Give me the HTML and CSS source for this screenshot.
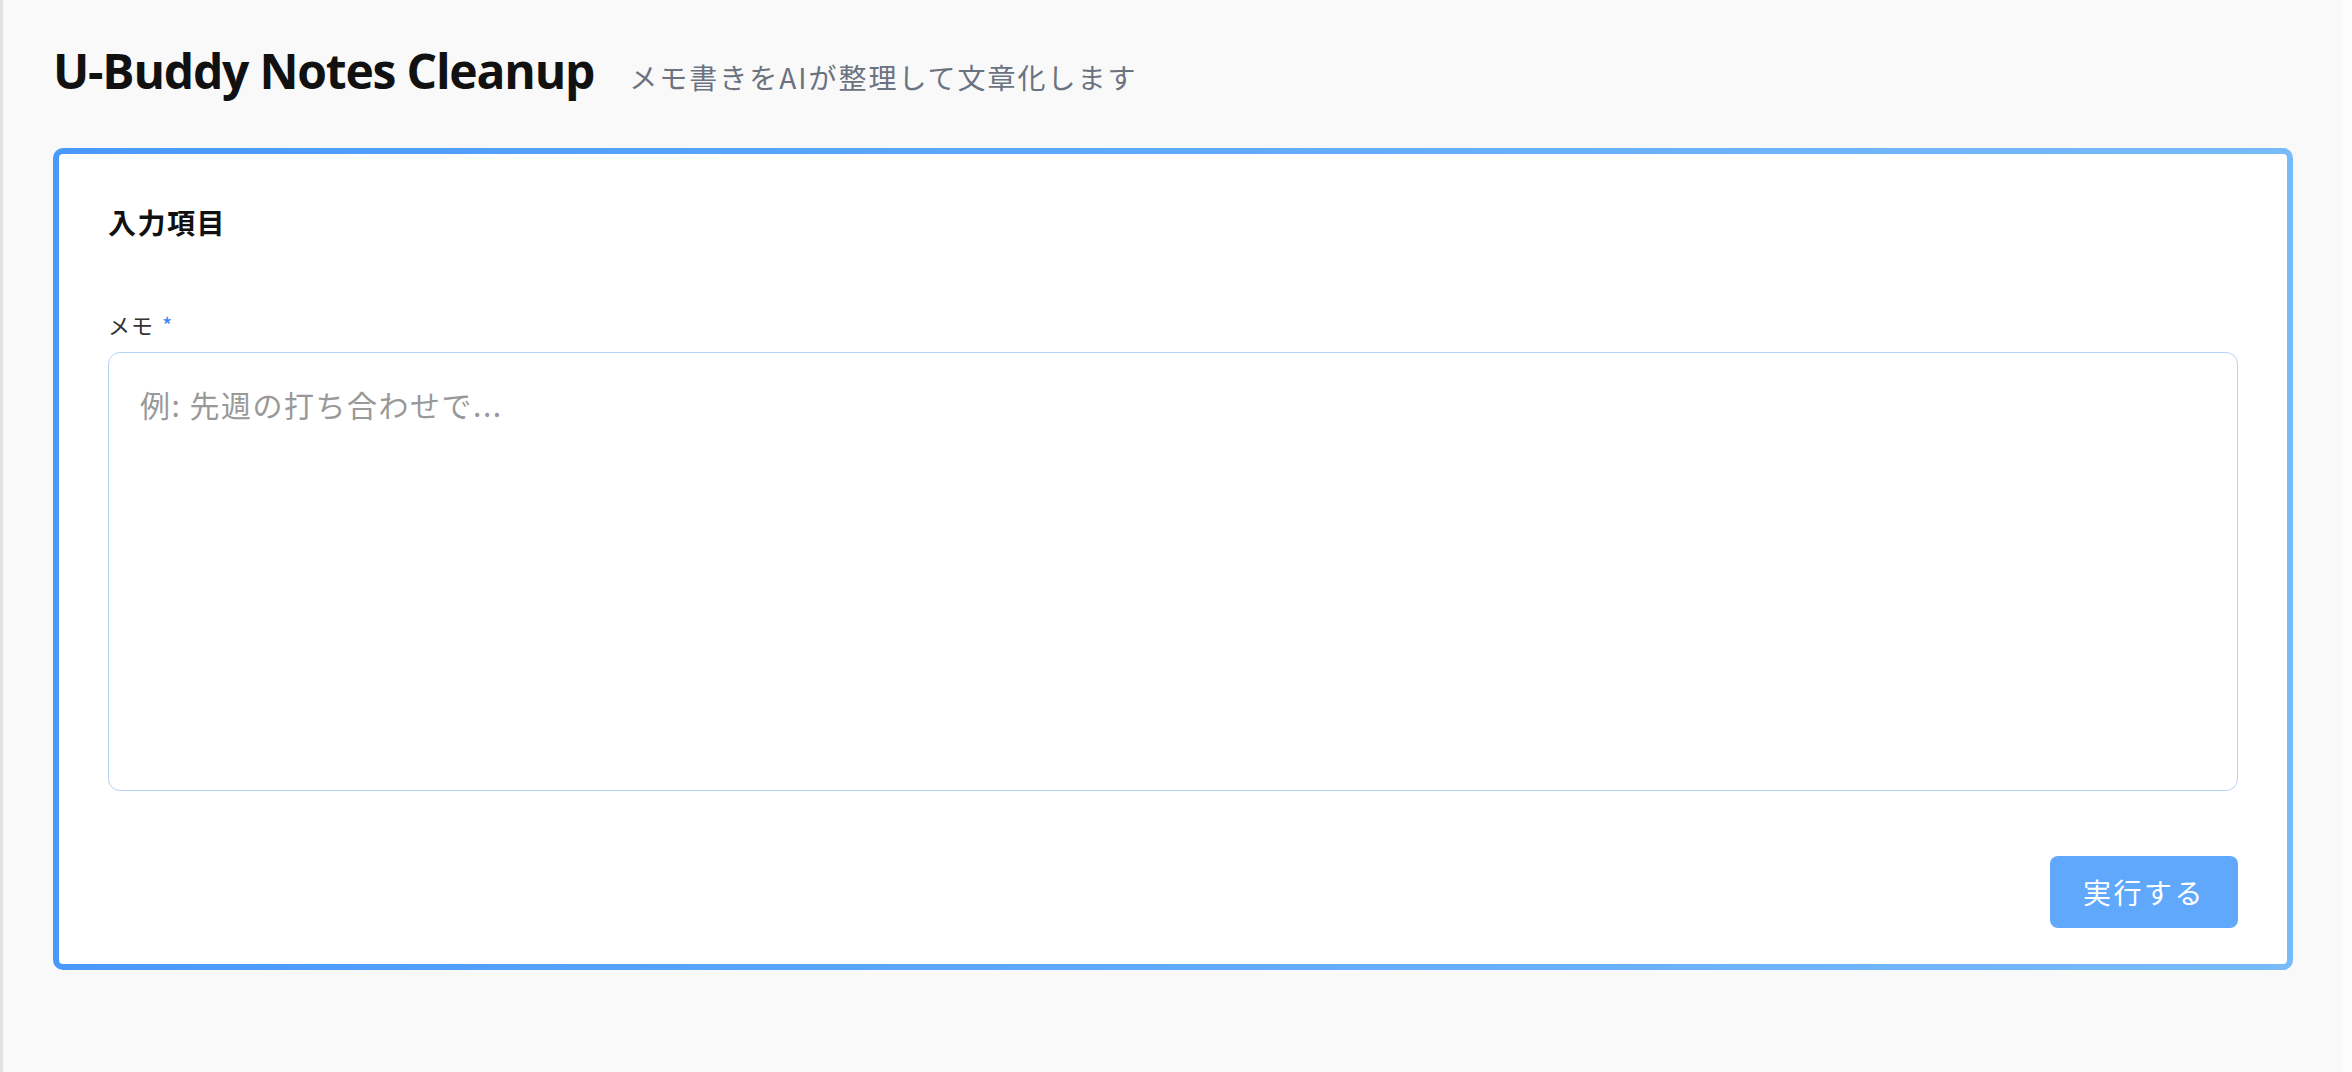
FILE: index.html
```html
<!DOCTYPE html>
<html lang="ja">
<head>
<meta charset="utf-8">
<title>U-Buddy Notes Cleanup</title>
<link rel="stylesheet" href="styles.css">
</head>
<body>
<div class="page">
  <header class="page-header">
    <h1 class="page-title">U-Buddy Notes Cleanup</h1>
    <p class="page-subtitle">メモ書きをAIが整理して文章化します</p>
  </header>
  <section class="card">
    <h2 class="card-title">入力項目</h2>
    <div class="field">
      <label class="field-label" for="memo">メモ <span class="required">*</span></label>
      <textarea id="memo" class="field-input" placeholder="例: 先週の打ち合わせで..."></textarea>
    </div>
    <div class="actions">
      <button class="run-button" type="button">実行する</button>
    </div>
  </section>
</div>
</body>
</html>
```
FILE: styles.css
```css
html, body {
  margin: 0;
  padding: 0;
  height: 100%;
}
body {
  background: #f9f9f9;
  border-left: 3px solid #e2e2e2;
  border-right: 10px solid #fcfcfc;
  font-family: "Open Sans", "Noto Sans CJK JP", sans-serif;
  color: #111;
}
.page {
  padding: 42px 49px 0 50px;
}
.page-header {
  display: flex;
  align-items: baseline;
  gap: 35px;
  margin: 0 0 48px 0;
}
.page-title {
  margin: 0;
  font-family: "Open Sans", sans-serif;
  font-weight: 700;
  font-size: 48px;
  line-height: 1.2;
  letter-spacing: -1.2px;
  color: #111;
}
.page-subtitle {
  margin: 0;
  font-family: "Noto Sans CJK JP", sans-serif;
  font-size: 28px;
  letter-spacing: 2px;
  color: #6b7280;
}
.card {
  border: 6px solid transparent;
  border-radius: 10px;
  background:
    linear-gradient(#fff, #fff) padding-box,
    linear-gradient(to right, #4899fa, #78bbfa) border-box;
  padding: 48px 49px 36px 49px;
}
.card-title {
  margin: 0;
  font-family: "Noto Sans CJK JP", sans-serif;
  font-weight: 700;
  font-size: 28px;
  letter-spacing: 1.5px;
  line-height: 40px;
  color: #111;
}
.field {
  margin-top: 66px;
  display: flex;
  flex-direction: column;
}
.field-label {
  font-family: "Noto Sans CJK JP", sans-serif;
  font-size: 22px;
  letter-spacing: 1px;
  word-spacing: 2px;
  line-height: 32px;
  color: #333;
  margin-bottom: 12px;
}
.required {
  color: #3b82f6;
}
.field-input {
  box-sizing: border-box;
  height: 439px;
  width: 100%;
  border: 1.5px solid #b5d2fa;
  border-radius: 12px;
  padding: 29px 31px;
  font-family: "Noto Sans CJK JP", sans-serif;
  font-size: 30px;
  letter-spacing: 1.5px;
  line-height: 1.5;
  resize: none;
  outline: none;
  background: #fff;
  color: #111;
}
.field-input::placeholder {
  color: #999;
}
.actions {
  margin-top: 65px;
  display: flex;
  justify-content: flex-end;
}
.run-button {
  height: 72px;
  width: 188px;
  border: none;
  border-radius: 8px;
  background: #60a8fb;
  color: #fff;
  font-family: "Noto Sans CJK JP", sans-serif;
  font-size: 28px;
  letter-spacing: 2.5px;
  padding: 0;
  cursor: pointer;
}
```
